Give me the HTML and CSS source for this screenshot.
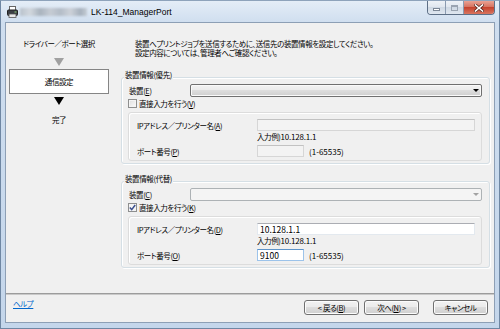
FILE: index.html
```html
<!DOCTYPE html>
<html lang="ja">
<head>
    <meta charset="UTF-8">
    <meta name="viewport" content="width=device-width, initial-scale=1.0">
    <title>LK-114_ManagerPort</title>
    <link rel="stylesheet" href="styles.css">
</head>
<body>
<div class="window">
    <div class="titlebar">
        <svg class="app-icon" width="11" height="12" viewBox="0 0 11 12">
            <rect x="2.5" y="0.5" width="6" height="4" fill="#fff" stroke="#666"/>
            <rect x="0.5" y="4" width="10" height="5.5" rx="1" fill="#3c3f44" stroke="#222"/>
            <rect x="2" y="8" width="7" height="3.5" fill="#e8e8e8" stroke="#555" stroke-width="0.8"/>
            <rect x="7.5" y="5.5" width="2" height="1" fill="#8fd07a"/>
        </svg>
        <span class="title-blur"></span>
        <span class="title">LK-114_ManagerPort</span>
        <div class="caption-buttons">
            <span class="cap-btn cap-min"><i></i></span>
            <span class="cap-btn cap-max"><i></i></span>
            <span class="cap-btn cap-close">
                <svg width="10" height="8" viewBox="0 0 10 8">
                    <path d="M1.5 1 L8.5 7 M8.5 1 L1.5 7" stroke="#5a2a24" stroke-width="3" stroke-linecap="square"/>
                    <path d="M1.5 1 L8.5 7 M8.5 1 L1.5 7" stroke="#fff" stroke-width="1.6" stroke-linecap="square"/>
                </svg>
            </span>
        </div>
    </div>

    <div class="client">
        <div class="main">
            <div class="steps">
                <div class="step">ドライバー／ポート選択</div>
                <div class="arrow arrow-done"></div>
                <div class="step step-current">通信設定</div>
                <div class="arrow arrow-next"></div>
                <div class="step step-last">完了</div>
            </div>

            <div class="content">
                <p class="intro">装置へプリントジョブを送信するために、送信先の装置情報を設定してください。<br>設定内容については、管理者へご確認ください。</p>

                <div class="group">
                    <div class="group-title">装置情報(優先)</div>
                    <div class="row">
                        <span class="device-label">装置(<u>E</u>)</span>
                        <div class="combo"><span class="combo-arrow"></span></div>
                    </div>
                    <div class="check-row">
                        <span class="checkbox"></span>
                        <span>直接入力を行う(<u>V</u>)</span>
                    </div>
                    <div class="subgroup">
                        <div class="row">
                            <span class="field-label">IPアドレス／プリンター名(<u>A</u>)</span>
                            <span class="textbox textbox-wide disabled"></span>
                        </div>
                        <div class="hint">入力例)<span class="num">10.128.1.1</span></div>
                        <div class="row row-port">
                            <span class="field-label">ポート番号(<u>P</u>)</span>
                            <span class="textbox textbox-port disabled"></span>
                            <span class="range">(1-65535)</span>
                        </div>
                    </div>
                </div>

                <div class="group group-alt">
                    <div class="group-title">装置情報(代替)</div>
                    <div class="row">
                        <span class="device-label">装置(<u>C</u>)</span>
                        <div class="combo disabled"><span class="combo-arrow"></span></div>
                    </div>
                    <div class="check-row">
                        <span class="checkbox checked">
                            <svg width="7" height="7" viewBox="0 0 7 7">
                                <path d="M0.8 3.6 L2.7 5.6 L6.2 1" fill="none" stroke="#3b4f8e" stroke-width="1.5"/>
                            </svg>
                        </span>
                        <span>直接入力を行う(<u>K</u>)</span>
                    </div>
                    <div class="subgroup">
                        <div class="row">
                            <span class="field-label">IPアドレス／プリンター名(<u>D</u>)</span>
                            <span class="textbox textbox-wide">10.128.1.1</span>
                        </div>
                        <div class="hint">入力例)<span class="num">10.128.1.1</span></div>
                        <div class="row row-port">
                            <span class="field-label">ポート番号(<u>O</u>)</span>
                            <span class="textbox textbox-port focused">9100</span>
                            <span class="range">(1-65535)</span>
                        </div>
                    </div>
                </div>
            </div>
        </div>

        <div class="footer">
            <a class="help" href="#">ヘルプ</a>
            <div class="buttons">
                <span class="button">&lt; 戻る(<u>B</u>)</span>
                <span class="button">次へ(<u>N</u>) &gt;</span>
                <span class="button button-cancel">キャンセル</span>
            </div>
        </div>
    </div>
</div>
</body>
</html>
```

FILE: styles.css
```css
* {
    box-sizing: border-box;
}
body {
    margin: 0;
    font-family: "Noto Sans CJK JP", "Noto Sans", sans-serif;
    font-size: 7.5px;
    letter-spacing: -0.4px;
    font-feature-settings: "palt";
    color: #000;
    background: #fff;
}
u {
    text-decoration: underline;
    text-underline-offset: 1px;
}

/* window frame */
.window {
    width: 500px;
    height: 329px;
    display: flex;
    flex-direction: column;
    padding: 0 4px 5px;
    border: 1px solid #6f87a3;
    border-top-color: #8ea3bb;
    background: linear-gradient(#e4edf7, #cfdeef 22px, #c4d6eb);
}
.titlebar {
    height: 21px;
    display: flex;
    align-items: center;
    flex-shrink: 0;
}
.app-icon {
    margin-left: 2px;
    margin-top: 1px;
}
.title-blur {
    width: 67px;
    height: 8px;
    margin-left: 2px;
    margin-top: 1px;
    background: linear-gradient(90deg, #b9c2cc, #d2d8de 15%, #a9b3be 30%, #c6ccd4 45%, #b3bcc7 60%, #cdd2d9 75%, #a6b1bd 90%, #c5ccd4);
    filter: blur(0.8px);
}
.title {
    margin-left: 4px;
    margin-top: 1px;
    font-family: "Liberation Sans", Arial, sans-serif;
    font-size: 8.5px;
    letter-spacing: 0;
    font-feature-settings: normal;
}
.caption-buttons {
    margin-left: auto;
    align-self: flex-start;
    display: flex;
    height: 14px;
    border: 1px solid #5d6f86;
    border-top: none;
    border-radius: 0 0 4px 4px;
    overflow: hidden;
}
.cap-btn {
    display: flex;
    align-items: center;
    justify-content: center;
    height: 100%;
}
.cap-min, .cap-max {
    width: 18px;
    border-right: 1px solid #8b9bb0;
    background: linear-gradient(#eef2f7, #dfe6ee 50%, #cfd9e4 50%, #dfe7f0);
}
.cap-min i {
    width: 7px;
    height: 3px;
    margin-top: 4px;
    border: 1px solid #7c8796;
    background: #fff;
}
.cap-max i {
    width: 7px;
    height: 6px;
    border: 1px solid #9aa4b1;
    border-top-width: 2px;
}
.cap-close {
    width: 30px;
    background: linear-gradient(#e9a294, #d56e5b 50%, #c5432e 50%, #d87560);
}

/* client area */
.client {
    flex: 1;
    display: flex;
    flex-direction: column;
    background: #f0f0f0;
    border: 1px solid #8d9fb5;
}
.main {
    flex: 1;
    display: flex;
}

/* wizard steps */
.steps {
    width: 115px;
    padding: 16px 12px 0 3px;
    display: flex;
    flex-direction: column;
    align-items: center;
    flex-shrink: 0;
}
.step {
    line-height: 10px;
    white-space: nowrap;
}
.arrow {
    width: 0;
    height: 0;
    border-left: 5px solid transparent;
    border-right: 5px solid transparent;
    border-top: 8px solid #a0a0a0;
    margin-top: 9px;
}
.arrow-next {
    border-top-color: #000;
    margin-top: 3px;
}
.step-current {
    width: 100px;
    height: 25px;
    margin-top: 3px;
    line-height: 23px;
    text-align: center;
    background: #fff;
    border: 1px solid #858585;
}
.step-last {
    margin-top: 10px;
}

/* content */
.content {
    flex: 1;
    padding: 16px 4px 0 0;
}
.intro {
    margin: 0 0 0 14px;
    line-height: 9px;
    white-space: nowrap;
}
.group {
    margin-top: 20px;
    padding: 6px 7px 2px 6px;
    border: 1px solid #d5dfe5;
    border-radius: 3px;
    box-shadow: inset 1px 1px 0 #fff, 1px 1px 0 #fff;
}
.group-alt {
    margin-top: 17px;
}
.group-title {
    width: fit-content;
    margin: -14px 0 4px -4px;
    padding: 0 1px;
    line-height: 10px;
    background: #f0f0f0;
}
.row {
    display: flex;
    align-items: center;
    height: 13px;
}
.device-label {
    width: 62px;
    padding-left: 1px;
    flex-shrink: 0;
}
.combo {
    flex: 1;
    height: 13px;
    display: flex;
    align-items: center;
    justify-content: flex-end;
    border: 1px solid #707070;
    border-radius: 2px;
    background: linear-gradient(#f2f2f2, #ebebeb 50%, #dddddd 50%, #cfcfcf);
    box-shadow: inset 0 0 0 1px #fafafa;
}
.combo-arrow {
    width: 0;
    height: 0;
    margin-right: 2px;
    border-left: 3px solid transparent;
    border-right: 3px solid transparent;
    border-top: 3px solid #000;
}
.combo.disabled {
    border-color: #adb2b5;
    background: #f4f4f4;
    box-shadow: none;
}
.combo.disabled .combo-arrow {
    border-top-color: #a2a2a2;
}
.check-row {
    display: flex;
    align-items: center;
    height: 10px;
    margin-top: 1px;
}
.checkbox {
    width: 9px;
    height: 9px;
    margin-right: 2px;
    display: flex;
    align-items: center;
    justify-content: center;
    border: 1px solid #8e8f8f;
    background: linear-gradient(135deg, #dedede, #fbfbfb);
    box-shadow: inset 0 0 0 1px #f4f4f4;
}
.checkbox.checked {
    background: #f4f4f4;
}
.subgroup {
    margin-top: 4px;
    padding: 6px 6px 3px 8px;
    border: 1px solid #dcdcdc;
    border-radius: 3px;
    box-shadow: inset 1px 1px 0 #fff;
}
.subgroup .row {
    height: 12px;
}
.field-label {
    width: 120px;
    flex-shrink: 0;
    white-space: nowrap;
}
.textbox {
    height: 12px;
    padding-left: 2px;
    line-height: 10px;
    font-size: 8.5px;
    letter-spacing: 0;
    background: #fff;
    border: 1px solid #e3e9ef;
    border-top-color: #abadb3;
}
.textbox-wide {
    flex: 1;
}
.textbox-port {
    width: 47px;
}
.textbox.disabled {
    background: #f3f3f3;
    border-color: #d6d6d6;
    border-top-color: #c2c2c2;
}
.textbox.focused {
    border-color: #9cc3ea;
    border-top-color: #5c93c9;
}
.range {
    margin-left: 5px;
    font-size: 8px;
    letter-spacing: 0;
}
.hint {
    margin: 1px 0 0 120px;
    line-height: 10px;
}
.num {
    font-size: 8px;
    letter-spacing: -0.2px;
}
.row-port {
    margin-top: 3px;
}

/* footer */
.footer {
    height: 29px;
    display: flex;
    align-items: flex-start;
    padding: 0 6px 0 7px;
    border-top: 1px solid #9c9c9c;
    box-shadow: inset 0 1px 0 #c9c9c9;
}
.help {
    margin-top: 5px;
    line-height: 10px;
    color: #0066cc;
}
.buttons {
    margin-left: auto;
    margin-top: 6px;
    display: flex;
    gap: 5px;
}
.button {
    width: 55px;
    height: 15px;
    line-height: 13px;
    text-align: center;
    border: 1px solid #707070;
    border-radius: 3px;
    background: linear-gradient(#f2f2f2, #ebebeb 50%, #dddddd 50%, #cfcfcf);
    box-shadow: inset 0 0 0 1px #fcfcfc;
}
.button-cancel {
    margin-left: 9px;
}
```
